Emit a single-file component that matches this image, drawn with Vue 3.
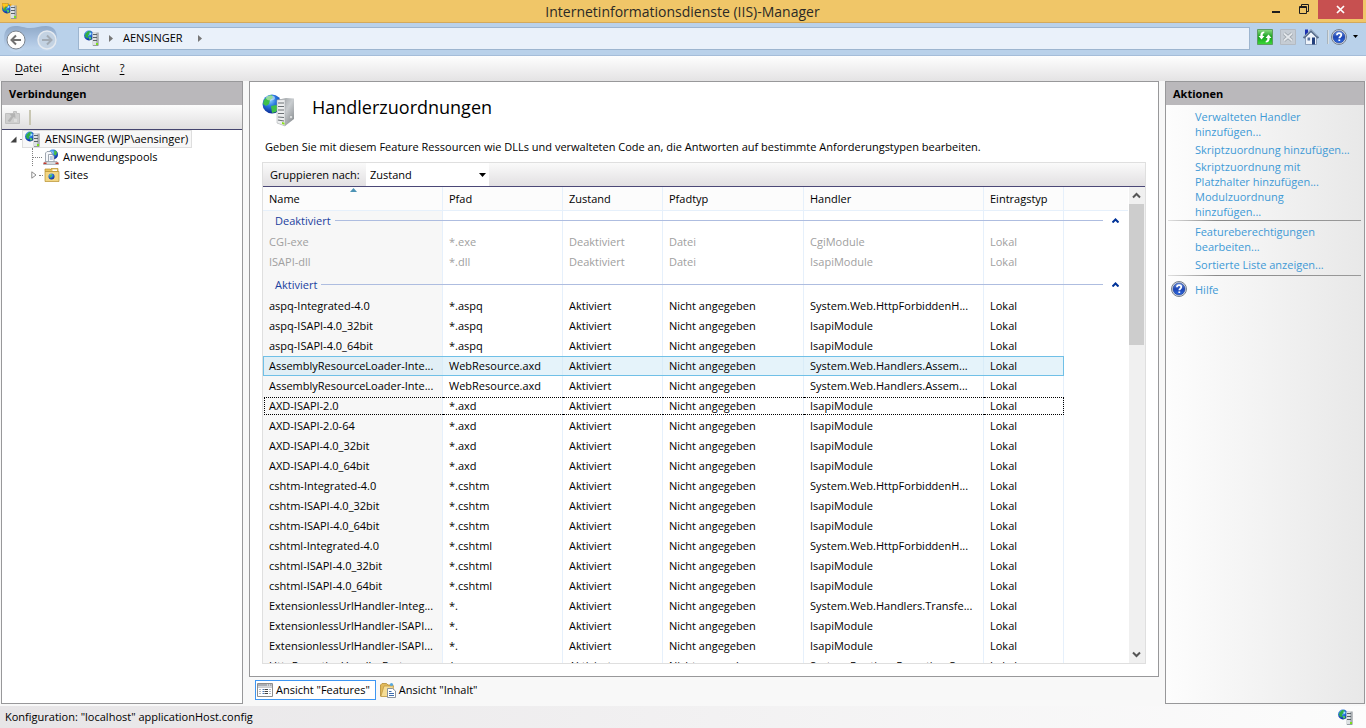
<script setup>
import { ref } from 'vue'

const columns = ['Name', 'Pfad', 'Zustand', 'Pfadtyp', 'Handler', 'Eintragstyp']
const on = (name, path, handler, mark) => ({
  cells: [name, path, 'Aktiviert', 'Nicht angegeben', handler, 'Lokal'],
  mark
})
const off = (name, path, handler) => ({
  cells: [name, path, 'Deaktiviert', 'Datei', handler, 'Lokal'],
  mark: 'disabled'
})
const groups = [
  {
    title: 'Deaktiviert',
    rows: [off('CGI-exe', '*.exe', 'CgiModule'), off('ISAPI-dll', '*.dll', 'IsapiModule')]
  },
  {
    title: 'Aktiviert',
    rows: [
      on('aspq-Integrated-4.0', '*.aspq', 'System.Web.HttpForbiddenH...'),
      on('aspq-ISAPI-4.0_32bit', '*.aspq', 'IsapiModule'),
      on('aspq-ISAPI-4.0_64bit', '*.aspq', 'IsapiModule'),
      on('AssemblyResourceLoader-Inte...', 'WebResource.axd', 'System.Web.Handlers.Assem...', 'selected'),
      on('AssemblyResourceLoader-Inte...', 'WebResource.axd', 'System.Web.Handlers.Assem...'),
      on('AXD-ISAPI-2.0', '*.axd', 'IsapiModule', 'focused'),
      on('AXD-ISAPI-2.0-64', '*.axd', 'IsapiModule'),
      on('AXD-ISAPI-4.0_32bit', '*.axd', 'IsapiModule'),
      on('AXD-ISAPI-4.0_64bit', '*.axd', 'IsapiModule'),
      on('cshtm-Integrated-4.0', '*.cshtm', 'System.Web.HttpForbiddenH...'),
      on('cshtm-ISAPI-4.0_32bit', '*.cshtm', 'IsapiModule'),
      on('cshtm-ISAPI-4.0_64bit', '*.cshtm', 'IsapiModule'),
      on('cshtml-Integrated-4.0', '*.cshtml', 'System.Web.HttpForbiddenH...'),
      on('cshtml-ISAPI-4.0_32bit', '*.cshtml', 'IsapiModule'),
      on('cshtml-ISAPI-4.0_64bit', '*.cshtml', 'IsapiModule'),
      on('ExtensionlessUrlHandler-Integ...', '*.', 'System.Web.Handlers.Transfe...'),
      on('ExtensionlessUrlHandler-ISAPI...', '*.', 'IsapiModule'),
      on('ExtensionlessUrlHandler-ISAPI...', '*.', 'IsapiModule'),
      on('HttpRemotingHandlerFact...', '*.rem', 'System.Runtime.Remoting.C...')
    ]
  }
]
const actionGroups = [
  [
    ['Verwalteten Handler', 'hinzufügen...'],
    ['Skriptzuordnung hinzufügen...'],
    ['Skriptzuordnung mit', 'Platzhalter hinzufügen...'],
    ['Modulzuordnung', 'hinzufügen...']
  ],
  [['Featureberechtigungen', 'bearbeiten...'], ['Sortierte Liste anzeigen...']]
]
const groupBy = ref('Zustand')
</script>

<template>
  <div class="window">
    <svg class="defs" aria-hidden="true">
      <defs>
        <radialGradient id="gGlobe" cx="0.4" cy="0.3" r="0.7">
          <stop offset="0" stop-color="#8fd4ff" />
          <stop offset="0.45" stop-color="#2a78e0" />
          <stop offset="1" stop-color="#0a2a96" />
        </radialGradient>
        <linearGradient id="gSide" x1="0" y1="0" x2="1" y2="1">
          <stop offset="0" stop-color="#8d9296" />
          <stop offset="0.5" stop-color="#c9cdd0" />
          <stop offset="1" stop-color="#7d8185" />
        </linearGradient>
        <linearGradient id="gHelp" x1="0" y1="0" x2="0" y2="1">
          <stop offset="0" stop-color="#6d95e6" />
          <stop offset="0.5" stop-color="#1d45b4" />
          <stop offset="1" stop-color="#2f6ae0" />
        </linearGradient>
        <linearGradient id="gPill" x1="0" y1="0" x2="0" y2="1">
          <stop offset="0" stop-color="#8fa9c8" />
          <stop offset="0.5" stop-color="#a9c1de" />
          <stop offset="1" stop-color="#c3d8ef" />
        </linearGradient>
        <linearGradient id="gGreen" x1="0" y1="0" x2="0" y2="1">
          <stop offset="0" stop-color="#8fdc86" />
          <stop offset="0.5" stop-color="#14a01c" />
          <stop offset="1" stop-color="#3ddb3a" />
        </linearGradient>
      </defs>
      <symbol id="server" viewBox="0 0 16 16">
        <circle cx="5" cy="5.500" r="4.900" fill="url(#gGlobe)" />
        <path d="M1.500 3.500 4.200 1l2.600.5L5.600 4 4 5.500l.6 2-1.800.4L.9 6z" fill="#2fae46" />
        <path d="M4.800 7l2.400.2v2L5.400 9.800z" fill="#55d060" />
        <path d="M5.500 2.500 7.500 3 7 5 5.500 4.500z" fill="#a5e6ff" />
        <path d="M8.500 2.500h5.500v13H8.500z" fill="#b4b9bd" />
        <path d="M8.500 2.500h3.500v13H8.500z" fill="#dde1e3" />
        <path d="M14.200 2.500v13H9" fill="none" stroke="#858c91" stroke-width=".8" />
        <path d="M9 4.500h4M9 7.500h4M9 10.500h4" stroke="#5a6369" />
        <path d="M12 13h2v2h-2z" fill="#7ce01a" />
      </symbol>
      <symbol id="help" viewBox="0 0 16 16">
        <circle cx="8" cy="8" r="7.500" fill="#dfe2e8" stroke="#76808e" />
        <circle cx="8" cy="8" r="6" fill="url(#gHelp)" stroke="#1b3a90" stroke-width=".6" />
        <path d="M5.900 6.200C6 4.700 7 4.200 8.100 4.200c1.200 0 2.200.7 2.200 1.900 0 1.600-2 1.700-2 3.200" fill="none" stroke="#fff" stroke-width="1.700" />
        <path d="M7.400 10.400h1.800v1.600H7.400z" fill="#fff" />
      </symbol>
    </svg>

    <header class="titlebar">
      <svg class="app-icon" width="16" height="16" viewBox="0 0 16 16">
        <use href="#server" width="16" height="16" />
        <path d="M0 .5h4l1-.5 1.400 1-.8 2.400-2.400.4L1.600 6z" fill="#ffc61e" stroke="#c28a10" stroke-width=".5" />
        <path d="M6 1h3.500L9 3.500z" fill="#f0a818" />
      </svg>
      <h1>Internetinformationsdienste (IIS)-Manager</h1>
      <div class="window-buttons">
        <button type="button" class="wb" aria-label="Minimieren">
          <svg width="26" height="20"><path d="M8 11h8v2H8z" fill="#1e1e1e" /></svg>
        </button>
        <button type="button" class="wb" aria-label="Wiederherstellen">
          <svg width="28" height="20" fill="none" stroke="#1e1e1e">
            <path d="M9.500 6.500h7v7h-7zM9 7.500h8M11.500 6V4.500h7v7H17" />
          </svg>
        </button>
        <button type="button" class="wb close" aria-label="Schließen">
          <svg width="45" height="19"><path d="M19 6l7 7M26 6l-7 7" stroke="#fff" stroke-width="1.700" /></svg>
        </button>
      </div>
    </header>

    <nav class="navbar">
      <div class="history">
        <svg class="pill" width="54" height="28" viewBox="0 0 54 28">
          <path d="M0 14C0 4 5 1 11 1c7 0 9 2 15 2s10-2 16-2c7 0 11 4 11 12S49 26 43 26c-6 0-8-3-16-3s-9 4-15 4S0 23 0 14z" fill="url(#gPill)" />
        </svg>
        <button type="button" aria-label="Zurück">
          <svg width="20" height="20" viewBox="0 0 20 20">
            <circle cx="10" cy="10" r="9" fill="#fdfdfd" stroke="#7d858f" />
            <path d="M15 10H6M10 5.500 5.500 10l4.500 4.500" fill="none" stroke="#707070" stroke-width="2" />
          </svg>
        </button>
        <button type="button" aria-label="Vorwärts">
          <svg width="20" height="20" viewBox="0 0 20 20">
            <circle cx="10" cy="10" r="9" fill="#c3d2e2" stroke="#e4e9ef" stroke-width="1.500" />
            <path d="M5 10h9M10 5.500l4.500 4.500-4.500 4.500" fill="none" stroke="#a2aab3" stroke-width="2" />
          </svg>
        </button>
      </div>
      <div class="address">
        <svg width="16" height="16"><use href="#server" width="16" height="16" /></svg>
        <svg class="crumb" width="4" height="7"><path d="M0 0l4 3.500L0 7z" fill="#777" /></svg>
        <span>AENSINGER</span>
        <svg class="crumb" width="4" height="7"><path d="M0 0l4 3.500L0 7z" fill="#777" /></svg>
      </div>
      <div class="nav-tools">
        <button type="button" aria-label="Aktualisieren">
          <svg width="16" height="16" viewBox="0 0 16 16">
            <path d="M.5.500h15v15H.5z" fill="url(#gGreen)" stroke="#5d9c62" />
            <path d="M1.500 7 4.500 10.500 7.500 7H5.700V6c0-1 .6-1.600 1.600-2V2.500C4.700 2.700 3.400 4 3.400 6v1z" fill="#fff" />
            <path d="M14.500 9 11.500 5.500 8.500 9h1.800v1c0 1-.6 1.600-1.600 2v1.500c2.600-.2 3.900-1.500 3.900-3.500V9z" fill="#fff" />
          </svg>
        </button>
        <button type="button" aria-label="Anhalten" disabled>
          <svg width="16" height="16" viewBox="0 0 16 16">
            <path d="M.5.500h15v15H.5z" fill="#c5ccd4" stroke="#b4bac2" />
            <path d="M4 4.500l8 7M12 4.500l-8 7" stroke="#9aa1a9" stroke-width="3.400" />
            <path d="M4 4.500l8 7M12 4.500l-8 7" stroke="#e4e8ec" stroke-width="1.800" />
          </svg>
        </button>
        <button type="button" aria-label="Startseite">
          <svg width="16" height="16" viewBox="0 0 16 16">
            <path d="M2.500 8v7.500h11V8L8 3z" fill="#eef3fa" stroke="#7c90ac" stroke-width=".8" />
            <path d="M2 .5h3v3L2 6.400z" fill="#1a2fb0" />
            <path d="M.6 9 8 1.600 15.400 9" fill="none" stroke="#566b8a" stroke-width="2" />
            <path d="M1.500 7.400 8 1l6.500 6.400" fill="none" stroke="#a9b8cc" stroke-width=".7" />
            <path d="M9 8.500h3v7H9z" fill="#24407c" />
            <path d="M4.500 8.500h2.600v3H4.500z" fill="#5872a0" />
          </svg>
        </button>
        <i class="sep"></i>
        <button type="button" class="help" aria-label="Hilfe">
          <svg width="16" height="16"><use href="#help" width="16" height="16" /></svg>
          <svg width="5" height="3"><path d="M0 0h5L2.500 3z" fill="#000" /></svg>
        </button>
      </div>
    </nav>

    <div class="menubar">
      <button type="button"><u>D</u>atei</button>
      <button type="button"><u>A</u>nsicht</button>
      <button type="button"><u>?</u></button>
    </div>

    <main class="workspace">
      <section class="panel connections">
        <h2>Verbindungen</h2>
        <div class="toolbar">
          <svg width="15" height="15" viewBox="0 0 15 15">
            <path d="M.5 3.500h8v-2h3v2h3v10H.5z" fill="#cfcfcf" stroke="#c0c0c0" />
            <path d="M2.500 11l4-5-2-1.500L10 3l.5 5-2-1-3.500 5z" fill="#b3b3b3" />
            <path d="M9 9h3v3H9z" fill="#dedede" />
          </svg>
          <i class="sep"></i>
        </div>
        <ul class="tree">
          <li class="root">
            <svg class="twisty" width="7" height="7"><path d="M6.500.5v6h-6z" fill="#404040" /></svg>
            <i class="dots"></i>
            <span class="node current">
              <svg width="16" height="16"><use href="#server" width="16" height="16" /></svg>
              AENSINGER (WJP\aensinger)
            </span>
          </li>
          <li class="child leaf">
            <i class="dots"></i>
            <span class="node">
              <svg width="16" height="16" viewBox="0 0 16 16">
                <circle cx="10" cy="5.500" r="5" fill="url(#gGlobe)" />
                <path d="M11.500 1l2.500 2-1 3.500-2-1z" fill="#4cc13c" />
                <path d="M2.500 12.500V4L4 2.500h3.500L9 4v8.500z" fill="#f5f7fa" stroke="#8a939e" stroke-width=".8" />
                <path d="M5.500 13V5.500H9L11 7v6z" fill="#fff" stroke="#8a939e" stroke-width=".8" />
                <path d="M6.800 8h3M6.800 10h3" stroke="#7a96c0" />
                <path d="M2 12.500h12l1.500 3H.5z" fill="#d6dade" stroke="#8a939e" stroke-width=".6" />
                <path d="M.5 13.500h3v1.500h-3zM12.500 13.500h3v1.500h-3z" fill="#c23a2e" />
              </svg>
              Anwendungspools
            </span>
          </li>
          <li class="child">
            <svg class="twisty" width="6" height="8"><path d="M.8.800 5 4 .8 7.200z" fill="#fff" stroke="#8a8a8a" /></svg>
            <i class="dots"></i>
            <span class="node">
              <svg width="16" height="16" viewBox="0 0 16 16">
                <path d="M1 4.500V2h5l1 1V1.500h7v3z" fill="#e9c35c" stroke="#b88f2c" stroke-width=".7" />
                <path d="M8.500 2.500h4.500V4H8.500z" fill="#fff" />
                <path d="M1 4.500h14v10H1z" fill="#f2d684" stroke="#b88f2c" stroke-width=".7" />
                <circle cx="7.500" cy="9.500" r="3" fill="url(#gGlobe)" />
                <path d="M5.500 9l2-2L8 9l-2 2z" fill="#4cc13c" />
              </svg>
              Sites
            </span>
          </li>
        </ul>
      </section>

      <section class="center">
        <div class="feature">
          <div class="feature-head">
            <svg width="34" height="34" viewBox="0 0 34 34">
              <circle cx="10" cy="10" r="9.500" fill="url(#gGlobe)" />
              <path d="M2 6 6 2l4-1 1 3-3 2-1 4-3 2-3-2z" fill="#3fc04a" />
              <path d="M9 12l5-1 3 2-3 5-4 1z" fill="#3fc04a" />
              <ellipse cx="8.500" cy="4" rx="4.500" ry="2.400" fill="#fff" opacity=".45" />
              <path d="M15 6l9-2 8 .5V25l-9 7-8-3z" fill="url(#gSide)" />
              <path d="M15 6l8-.5V32l-8-3z" fill="#eceeef" stroke="#a2a6a9" stroke-width=".5" />
              <path d="M16 9h6M16 12.500h6M16 16h6M16 19.500h6M16 23l6 .5M16 26l6 1" stroke="#6b7175" stroke-width="1.200" />
              <path d="M20 28l2.500.8v2L20 30z" fill="#8be01c" />
              <circle cx="29" cy="23" r="1.500" fill="#e8eaeb" stroke="#8b9093" stroke-width=".5" />
            </svg>
            <h2>Handlerzuordnungen</h2>
          </div>
          <p>Geben Sie mit diesem Feature Ressourcen wie DLLs und verwalteten Code an, die Antworten auf bestimmte Anforderungstypen bearbeiten.</p>
          <div class="grid">
            <div class="groupbar">
              <label for="group-by">Gruppieren nach:</label>
              <span class="select">
                <select id="group-by" v-model="groupBy">
                  <option>Zustand</option>
                  <option>Keine Gruppierung</option>
                </select>
                <svg width="7" height="4"><path d="M0 0h7L3.500 4z" fill="#000" /></svg>
              </span>
            </div>
            <div class="scroller">
              <div class="viewport">
                <table>
                  <colgroup>
                    <col class="w-name" /><col class="w-path" /><col class="w-state" />
                    <col class="w-type" /><col class="w-handler" /><col class="w-entry" /><col />
                  </colgroup>
                  <thead>
                    <tr>
                      <th v-for="(c, i) in columns" :key="c" scope="col">
                        {{ c }}
                        <svg v-if="i === 0" class="sort" width="7" height="4"><path d="M0 4h7L3.500 0z" fill="#4d93b5" /></svg>
                      </th>
                      <td></td>
                    </tr>
                  </thead>
                  <tbody v-for="g in groups" :key="g.title">
                    <tr class="group">
                      <th colspan="7" scope="rowgroup">
                        <div>
                          <span>{{ g.title }}</span>
                          <i></i>
                          <svg width="7" height="5"><path d="M.5 4.500l3-3 3 3" fill="none" stroke="#003399" stroke-width="2" /></svg>
                        </div>
                      </th>
                    </tr>
                    <tr v-for="(r, i) in g.rows" :key="i" :class="r.mark">
                      <td v-for="(c, j) in r.cells" :key="j"><div>{{ c }}</div></td>
                      <td class="rest"></td>
                    </tr>
                  </tbody>
                </table>
              </div>
              <div class="scrollbar">
                <svg width="15" height="17"><path d="M4 10.500l3.500-3.500 3.500 3.500" fill="none" stroke="#555" stroke-width="2" /></svg>
                <div class="thumb"></div>
                <svg width="15" height="17"><path d="M4 6.500l3.500 3.500L11 6.500" fill="none" stroke="#555" stroke-width="2" /></svg>
              </div>
            </div>
          </div>
        </div>
        <div class="tabs">
          <button type="button" class="active">
            <svg width="16" height="16" viewBox="0 0 16 16">
              <path d="M.5 1.500h15v13H.5z" fill="#fff" stroke="#8c8c8c" />
              <path d="M1 2h14v2.500H1z" fill="#a9adb3" />
              <path d="M10 3h1M12 3h1M14 3h.5" stroke="#fff" />
              <path d="M1 5.500h14" stroke="#c9ccd0" />
              <path d="M2 7.500h2M2 9.500h2M2 11.500h2M12 7.500h2M12 9.500h2M12 11.500h2" stroke="#b3b8bf" />
              <path d="M5.500 7.500h1.500M5.500 9.500h1.500M5.500 11.500h1.500" stroke="#4b79b8" />
              <path d="M7.500 7.500H11M7.500 9.500H11M7.500 11.500H11" stroke="#444" />
            </svg>
            <span>Ansicht "Features"</span>
          </button>
          <button type="button">
            <svg width="16" height="16" viewBox="0 0 16 16">
              <path d="M.5 3 2 1.500h4.500L8 3h5v11H.5z" fill="#e2b95a" stroke="#b38b34" stroke-width=".8" />
              <path d="M4 4h9.500l-2 10.500H.8z" fill="#f6dd95" stroke="#c09a45" stroke-width=".8" />
              <circle cx="11.500" cy="2.500" r="1.600" fill="#58a8e0" />
              <path d="M7.500 6.500h5l3 2.500v6.500h-8z" fill="#fff" stroke="#7f8893" stroke-width=".9" />
              <path d="M9 9.500h2.500M9 11.500h5M9 13.500h5" stroke="#3c6cae" />
            </svg>
            <span>Ansicht "Inhalt"</span>
          </button>
        </div>
      </section>

      <aside class="panel actions">
        <h2>Aktionen</h2>
        <div v-for="(g, i) in actionGroups" :key="i" class="action-group">
          <a v-for="a in g" :key="a[0]" href="#" :class="{ single: a.length === 1 }">
            <span v-for="line in a" :key="line">{{ line }}</span>
          </a>
        </div>
        <div class="action-group help-group">
          <svg width="16" height="16"><use href="#help" width="16" height="16" /></svg>
          <a href="#" class="single">Hilfe</a>
        </div>
      </aside>
    </main>

    <footer class="statusbar">
      <span>Konfiguration: "localhost" applicationHost.config</span>
      <svg width="16" height="16"><use href="#server" width="16" height="16" /></svg>
    </footer>
  </div>
</template>

<style>
body {
  margin: 0;
  background: #f8f8f8;
}
</style>

<style scoped>
.window {
  display: flex;
  flex-direction: column;
  height: 100vh;
  overflow: hidden;
  background: #f8f8f8;
  color: #000;
  font: 11px/16px "Open Sans", "Noto Sans", sans-serif;
  white-space: nowrap;
}
.window * {
  box-sizing: border-box;
}
.defs {
  position: absolute;
  width: 0;
  height: 0;
}
svg {
  display: block;
  flex: none;
}
h1, h2, p, ul {
  margin: 0;
  padding: 0;
}
button {
  display: flex;
  align-items: center;
  padding: 0;
  border: 0;
  background: none;
  color: inherit;
  font: inherit;
}

.titlebar {
  display: grid;
  grid-template-columns: 1fr auto 1fr;
  align-items: start;
  flex: none;
  height: 23px;
  padding: 0 3px 0 2px;
  background: #f0c668;
  border-bottom: 1px solid #d3a95c;
}
.app-icon {
  margin-top: 3px;
}
.titlebar h1 {
  color: #2b2a26;
  font-size: 14px;
  font-weight: 400;
  line-height: 23px;
}
.window-buttons {
  display: flex;
  justify-content: flex-end;
}
.wb.close {
  height: 19px;
  background: #c75050;
}

.navbar {
  display: flex;
  align-items: center;
  flex: none;
  height: 33px;
  padding: 0 8px 0 5px;
  background: #b9d1ea;
  border-bottom: 1px solid #a5bdd9;
}
.history {
  position: relative;
  display: flex;
  align-items: center;
  gap: 11px;
  width: 73px;
  padding: 1px 0 0 1px;
}
.history button {
  position: relative;
}
.pill {
  position: absolute;
  left: -1px;
  top: -4px;
}
.address {
  display: flex;
  align-items: center;
  flex: 1;
  height: 23px;
  margin-bottom: 2px;
  padding-left: 5px;
  background: #eaf1fa;
  border: 1px solid #9db5cf;
}
.address span {
  min-width: 62px;
}
.crumb {
  margin: 0 10px 0 9px;
}
.address .crumb:last-child {
  margin-left: 13px;
}
.nav-tools {
  display: flex;
  align-items: center;
  gap: 7px;
  margin: 0 0 5px 7px;
}
.nav-tools .sep {
  width: 2px;
  height: 14px;
  margin: 0 -5px 0 1px;
  background: #d9dfe2;
  border-left: 1px solid #a8b4bd;
}
.help {
  gap: 6px;
}

.menubar {
  display: flex;
  align-items: center;
  gap: 20px;
  flex: none;
  height: 25px;
  padding: 0 0 1px 15px;
  background: linear-gradient(#fefefe, #e4e3e4);
}
u {
  text-underline-offset: 2px;
}

.workspace {
  display: grid;
  grid-template-columns: 242px minmax(0, 1fr) 200px;
  gap: 7px;
  flex: 1;
  min-height: 0;
  padding: 0 1px 2px;
}
.panel {
  border: 1px solid #98989a;
}
.panel h2 {
  height: 23px;
  padding-left: 7px;
  background: #bab8bb;
  font-size: 11px;
  font-weight: 700;
  line-height: 23px;
}
.connections {
  background: #fff;
}
.toolbar {
  display: flex;
  align-items: center;
  gap: 9px;
  height: 25px;
  padding-left: 3px;
  background: linear-gradient(#fcfcfc, #e0dfe0);
  border-bottom: 1px solid #45456f;
}
.toolbar .sep {
  width: 2px;
  height: 15px;
  background: #c8c6b2;
}
.tree {
  list-style: none;
}
.tree li {
  display: flex;
  align-items: center;
  height: 18px;
}
.root {
  padding-left: 8px;
}
.child {
  padding-left: 29px;
}
.dots {
  border-top: 1px dotted #808080;
}
.root .dots {
  width: 2px;
  margin-left: 3px;
}
.child .dots {
  width: 4px;
  margin: 0 1px 0 2px;
}
.child.leaf {
  padding-left: 30px;
}
.child.leaf::before {
  content: "";
  height: 18px;
  border-left: 1px dotted #808080;
}
.child.leaf .dots {
  width: 9px;
  margin: 0 1px 0 0;
}
.node {
  display: flex;
  align-items: center;
  gap: 4px;
}
.node.current {
  height: 18px;
  padding: 0 3px 0 2px;
  background: #f7f7f7;
  border: 1px solid #dedede;
}

.center {
  display: flex;
  flex-direction: column;
  min-width: 0;
  min-height: 0;
}
.feature {
  display: flex;
  flex-direction: column;
  flex: 1;
  min-height: 0;
  margin: 0 -1px;
  padding: 12px;
  background: #fff;
  border: 1px solid #98989a;
}
.feature-head {
  display: flex;
  align-items: center;
  gap: 16px;
  height: 34px;
}
.feature-head h2 {
  margin-bottom: 8px;
  font-size: 18px;
  font-weight: 400;
  line-height: 24px;
}
.feature p {
  margin: 11px 0 7px 3px;
}
.grid {
  display: flex;
  flex-direction: column;
  flex: 1;
  min-height: 0;
  border: 1px solid #dfdfdf;
}
.groupbar {
  display: flex;
  align-items: center;
  flex: none;
  height: 24px;
  padding-left: 7px;
  background: linear-gradient(#fafafa, #e2e0e2);
  border-bottom: 1px solid #4b4877;
}
.groupbar label {
  min-width: 96px;
}
.select {
  display: flex;
  align-items: center;
  width: 123px;
  height: 23px;
  padding-right: 3px;
  background: #fff;
}
select {
  flex: 1;
  min-width: 0;
  height: 22px;
  padding: 0 4px;
  border: 0;
  background: none;
  color: #000;
  font: inherit;
  appearance: none;
}
.scroller {
  display: flex;
  flex: 1;
  min-height: 0;
}
.viewport {
  flex: 1;
  min-width: 0;
  overflow: hidden;
  padding-right: 1px;
}
table {
  width: 100%;
  table-layout: fixed;
  border-collapse: separate;
  border-spacing: 0;
  background: linear-gradient(to right,
    #f7f7f7 179px, #e6f0fb 179px 180px,
    #fff 180px 299px, #e6f0fb 299px 300px,
    #fff 300px 399px, #e6f0fb 399px 400px,
    #fff 400px 540px, #e6f0fb 540px 541px,
    #fff 541px 720px, #e6f0fb 720px 721px,
    #fff 721px 800px, #e6f0fb 800px 801px,
    #fff 801px);
}
.w-name, .w-handler { width: 180px; }
.w-path { width: 120px; }
.w-state { width: 100px; }
.w-type { width: 141px; }
.w-entry { width: 80px; }
th, td {
  height: 20px;
  padding: 0;
  font-weight: 400;
  text-align: left;
}
thead th,
thead td {
  position: relative;
  height: 24px;
  background: #fcfcfc;
  border-bottom: 1px solid #e6f0fb;
}
thead th {
  padding-left: 6px;
  border-right: 1px solid #e6f0fb;
}
.sort {
  position: absolute;
  left: 87px;
  top: 1px;
}
.group th {
  height: 21px;
  padding-bottom: 2px;
}
tbody + tbody .group th {
  height: 24px;
  padding-top: 3px;
}
.group div {
  display: flex;
  align-items: center;
  gap: 4px;
  padding: 0 9px 0 12px;
  color: #1a3e9e;
}
.group i {
  flex: 1;
  height: 1px;
  margin-right: 5px;
  background: #aebde0;
}
tbody td {
  padding: 1px 0;
}
tbody td div {
  height: 18px;
  padding-left: 6px;
  overflow: hidden;
  line-height: 18px;
}
.disabled {
  color: #a0a0a0;
}
.selected td:not(.rest) {
  background: rgba(203, 232, 246, 0.5);
  box-shadow: inset 0 1px #70c0e7, inset 0 -1px #70c0e7;
}
.selected td:first-child {
  box-shadow: inset 0 1px #70c0e7, inset 0 -1px #70c0e7, inset 1px 0 #70c0e7;
}
.selected td:nth-child(6) {
  box-shadow: inset 0 1px #70c0e7, inset 0 -1px #70c0e7, inset -1px 0 #70c0e7;
}
.focused td div {
  border: 0 dotted #000;
  border-width: 1px 0;
  line-height: 16px;
}
.focused td:first-child {
  padding-left: 1px;
}
.focused td:first-child div {
  padding-left: 4px;
  border-left-width: 1px;
}
.focused td:nth-child(6) div {
  border-right-width: 1px;
}
.scrollbar {
  display: flex;
  flex-direction: column;
  flex: none;
  width: 16px;
  overflow: hidden;
  background: #f0f0f0;
}
.thumb {
  height: 141px;
  margin: 0 1px 0 0;
  background: #cdcdcd;
}
.scrollbar svg:last-child {
  margin-top: auto;
}

.tabs {
  display: flex;
  align-items: flex-start;
  gap: 2px;
  height: 27px;
  padding: 3px 0 0 5px;
}
.tabs button {
  gap: 3px;
  height: 20px;
  padding: 0 5px 0 1px;
  border: 1px solid transparent;
}
.tabs .active {
  background: #fff;
  border-color: #3d96f3;
}

.actions {
  background: linear-gradient(to right, #fdfdfd, #e8e8e8);
}
.action-group {
  display: flex;
  flex-direction: column;
  padding: 2px 0 1px 29px;
}
.actions h2 + .action-group {
  padding-top: 4px;
}
.action-group:not(:last-child)::after {
  content: "";
  height: 1px;
  margin: 1px 3px 0 -27px;
  background: linear-gradient(to right, #e0e0e0, #8a8a8a 25%, #9a9a9a);
}
.actions a {
  display: flex;
  flex-direction: column;
  color: #3f9ad6;
  line-height: 15px;
  text-decoration: none;
}
.actions a.single {
  padding: 3px 0 2px;
}
.help-group {
  flex-direction: row;
  align-items: center;
  gap: 8px;
  padding-left: 5px;
}

.statusbar {
  display: flex;
  align-items: center;
  justify-content: space-between;
  flex: none;
  height: 22px;
  padding: 0 12px 0 5px;
  background: linear-gradient(to right, #e7e5e7, #fcfcfc);
}
</style>
